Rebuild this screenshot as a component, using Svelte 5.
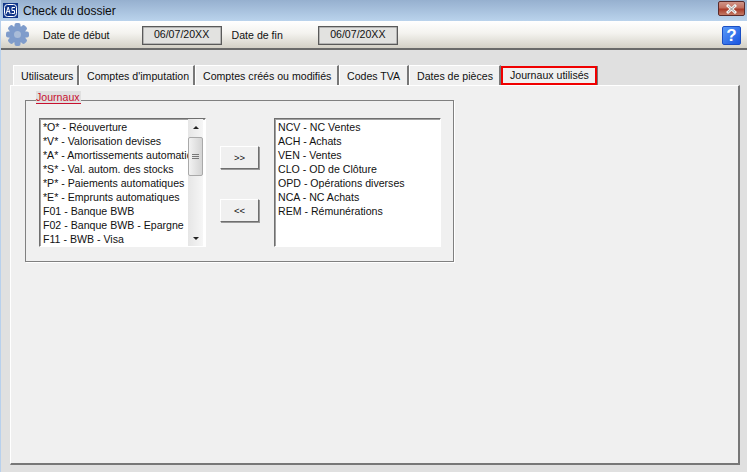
<script lang="ts">
  const tabs = [
    { label: "Utilisateurs", width: 66 },
    { label: "Comptes d'imputation", width: 116 },
    { label: "Comptes créés ou modifiés", width: 144 },
    { label: "Codes TVA", width: 70 },
    { label: "Dates de pièces", width: 92 },
    { label: "Journaux utilisés", width: 96 },
  ];
  const available = [
    "*O* - Réouverture",
    "*V* - Valorisation devises",
    "*A* - Amortissements automatiques",
    "*S* - Val. autom. des stocks",
    "*P* - Paiements automatiques",
    "*E* - Emprunts automatiques",
    "F01 - Banque BWB",
    "F02 - Banque BWB - Epargne",
    "F11 - BWB - Visa",
  ];
  const used = [
    "NCV - NC Ventes",
    "ACH - Achats",
    "VEN - Ventes",
    "CLO - OD de Clôture",
    "OPD - Opérations diverses",
    "NCA - NC Achats",
    "REM - Rémunérations",
  ];
  const teeth = [0, 45, 90, 135];
</script>

<div class="window">
  <header class="titlebar">
    <svg class="logo" width="15" height="15" viewBox="0 0 15 15">
      <rect x="0" y="0" width="15" height="15" fill="#12378a" />
      <rect x="1.5" y="1.5" width="12" height="12" rx="3" fill="none" stroke="#fff" stroke-width="1" />
      <path d="M3 11 L5.2 4 L7.2 11 M3.9 8.6 H6.5 M12 4.5 H9 V7.5 H11.5 V10.5 H8.5" fill="none" stroke="#fff" stroke-width="1" />
    </svg>
    <span class="title">Check du dossier</span>
    <button class="close" aria-label="Fermer">
      <svg width="15" height="10" viewBox="0 0 15 10">
        <path d="M3 1 L12 9 M12 1 L3 9" stroke="#f4f4f4" stroke-width="3" />
        <path d="M4 1.8 L11 8.2 M11 1.8 L4 8.2" stroke="#777" stroke-width="0.7" />
      </svg>
    </button>
  </header>

  <div class="toolbar">
    <svg class="gear" width="25" height="25" viewBox="0 0 25 25">
      <g fill="#7f9ccb">
        <circle cx="12.5" cy="12.5" r="8.5" />
        {#each teeth as angle}
          <rect x="9.5" y="1" width="6" height="23" rx="2" transform={`rotate(${angle} 12.5 12.5)`} />
        {/each}
      </g>
      <circle cx="12.5" cy="12.5" r="3.5" fill="#a9bcd8" />
    </svg>
    <span class="date-label first">Date de début</span>
    <span class="date-field">06/07/20XX</span>
    <span class="date-label second">Date de fin</span>
    <span class="date-field">06/07/20XX</span>
    <button class="help" aria-label="Aide">?</button>
  </div>

  <main class="content">
    <nav class="tabs">
      {#each tabs as tab, i}
        <span class="tab" class:active={i === tabs.length - 1} style={`width:${tab.width}px`}>{tab.label}</span>
      {/each}
    </nav>

    <section class="panel">
      <fieldset class="group">
        <span class="legend">Journaux</span>
        <div class="picker">
          <div class="listbox">
            <ul class="items">
              {#each available as item}
                <li>{item}</li>
              {/each}
            </ul>
            <div class="scrollbar">
              <span class="arrow up"></span>
              <span class="thumb">
                <span class="grip"></span>
                <span class="grip"></span>
                <span class="grip"></span>
              </span>
              <span class="arrow down"></span>
            </div>
          </div>
          <div class="moves">
            <button class="move">&gt;&gt;</button>
            <button class="move">&lt;&lt;</button>
          </div>
          <div class="listbox">
            <ul class="items">
              {#each used as item}
                <li>{item}</li>
              {/each}
            </ul>
          </div>
        </div>
      </fieldset>
    </section>
  </main>
</div>

<style>
  :global(body) {
    margin: 0;
    background: #e0e0e0;
  }

  .window {
    width: 747px;
    height: 472px;
    box-sizing: border-box;
    border-left: 1px solid #b8d0ec;
    display: flex;
    flex-direction: column;
    font-family: "Liberation Sans", Arial, sans-serif;
    font-size: 10.6px;
    color: #111;
    background: #e0e0e0;
    overflow: hidden;
    position: relative;
  }

  .titlebar {
    height: 21px;
    flex: none;
    display: flex;
    align-items: center;
    padding: 0 2px 0 3px;
    margin-left: -1px;
    background: linear-gradient(#96b0cf, #bad3ec);
  }

  .logo {
    margin-right: 5px;
    margin-top: -1px;
  }

  .title {
    font-size: 12px;
    color: #0c0c0c;
  }

  .close {
    margin-left: auto;
    width: 27px;
    height: 15px;
    margin-top: -4px;
    padding: 0;
    display: flex;
    align-items: center;
    justify-content: center;
    border: 1px solid #5a2a2a;
    border-radius: 2px;
    background: linear-gradient(#cf9488 0%, #c26f5e 45%, #a93a28 55%, #c27a66 100%);
  }

  .toolbar {
    height: 27px;
    flex: none;
    display: flex;
    align-items: center;
    padding-left: 4px;
    background: linear-gradient(#fff 0%, #f4f3ef 45%, #d3d0c6 100%);
    border-bottom: 2px solid #6a6a6a;
    position: relative;
  }

  .gear {
    margin-right: 13px;
  }

  .date-label {
    margin-top: 1px;
  }

  .date-label.first {
    margin-right: 32px;
  }

  .date-label.second {
    margin-left: 10px;
    margin-right: 35px;
  }

  .date-field {
    width: 80px;
    height: 19px;
    box-sizing: border-box;
    border: 1px solid #5a5a5a;
    box-shadow: inset 0 0 0 0.5px #888;
    background: #e2e2e0;
    text-align: center;
    line-height: 15px;
    margin-top: 2px;
  }

  .help {
    position: absolute;
    right: 6px;
    top: 5px;
    width: 19px;
    height: 19px;
    padding: 0;
    border: 1px solid #1b4fc4;
    border-radius: 2px;
    background: linear-gradient(135deg, #5a9af8, #1a55e0);
    color: #fff;
    font: bold 17px/17px "Liberation Sans", Arial, sans-serif;
  }

  .content {
    flex: 1;
    display: flex;
    flex-direction: column;
    padding: 15px 7px 7px 9px;
    min-height: 0;
  }

  .tabs {
    display: flex;
    height: 20px;
    flex: none;
    padding-left: 3px;
    position: relative;
    z-index: 1;
  }

  .tab {
    box-sizing: border-box;
    flex: none;
    height: 20px;
    padding-left: 7px;
    line-height: 20px;
    background: #f0f0f0;
    border-top: 1px solid #fff;
    border-left: 1px solid #fff;
    border-right: 2px solid #777;
    white-space: nowrap;
  }

  .tab.active {
    height: 19px;
    line-height: 15px;
    margin-top: 1px;
    border: 2px solid #f00000;
    box-shadow: 1px 0 0 #777;
  }

  .panel {
    flex: 1;
    box-sizing: border-box;
    background: #f0f0f0;
    border-left: 1px solid #fff;
    border-top: 1px solid #fff;
    border-right: 2px solid #777;
    border-bottom: 2px solid #777;
    padding: 14px 0 0 14px;
  }

  .group {
    position: relative;
    box-sizing: border-box;
    width: 429px;
    height: 162px;
    margin: 0;
    padding: 17px 0 0 13px;
    border: 1px solid #808080;
    box-shadow: 1px 1px 0 #fff;
  }

  .legend {
    position: absolute;
    left: 10px;
    top: -10px;
    width: 45px;
    height: 12px;
    line-height: 12px;
    color: #c8102e;
    background: #e0e0e0;
    border-bottom: 1px solid #c8102e;
  }

  .picker {
    display: flex;
    align-items: flex-start;
  }

  .listbox {
    box-sizing: border-box;
    width: 167px;
    height: 129px;
    display: flex;
    background: #fff;
    border: 1px solid #6f6f6f;
    border-right-color: #fff;
    border-bottom-color: #fff;
    box-shadow: inset 1px 1px 0 #a0a0a0;
    overflow: hidden;
  }

  .items {
    flex: 1;
    min-width: 0;
    margin: 0;
    padding: 1px 0 0 3px;
    list-style: none;
    overflow: hidden;
  }

  .items li {
    height: 14px;
    line-height: 14px;
    white-space: nowrap;
  }

  .scrollbar {
    width: 15px;
    flex: none;
    margin-right: 2px;
    display: flex;
    flex-direction: column;
    align-items: center;
    background: linear-gradient(90deg, #e6e6e6, #f6f6f6);
    padding-top: 7px;
    box-sizing: border-box;
  }

  .arrow {
    width: 0;
    height: 0;
    border-left: 3px solid transparent;
    border-right: 3px solid transparent;
  }

  .arrow.up {
    border-bottom: 3px solid #222;
  }

  .arrow.down {
    margin-top: auto;
    margin-bottom: 6px;
    border-top: 3px solid #222;
  }

  .thumb {
    width: 15px;
    height: 39px;
    box-sizing: border-box;
    margin-top: 8px;
    border: 1px solid #a9a9a9;
    border-radius: 2px;
    background: linear-gradient(90deg, #f2f2f2, #d4d4d4);
    display: flex;
    flex-direction: column;
    align-items: center;
    justify-content: center;
    gap: 1px;
  }

  .grip {
    width: 7px;
    height: 1px;
    background: #777;
  }

  .moves {
    width: 68px;
    box-sizing: border-box;
    padding: 28px 0 0 14px;
    display: flex;
    flex-direction: column;
    gap: 30px;
  }

  .move {
    width: 39px;
    height: 23px;
    padding: 0;
    font: 9.5px "Liberation Sans", Arial, sans-serif;
    color: #111;
    background: #f0f0f0;
    border: 1px solid;
    border-color: #fff #6f6f6f #6f6f6f #fff;
    box-shadow: 1px 1px 0 #9a9a9a;
  }
</style>
